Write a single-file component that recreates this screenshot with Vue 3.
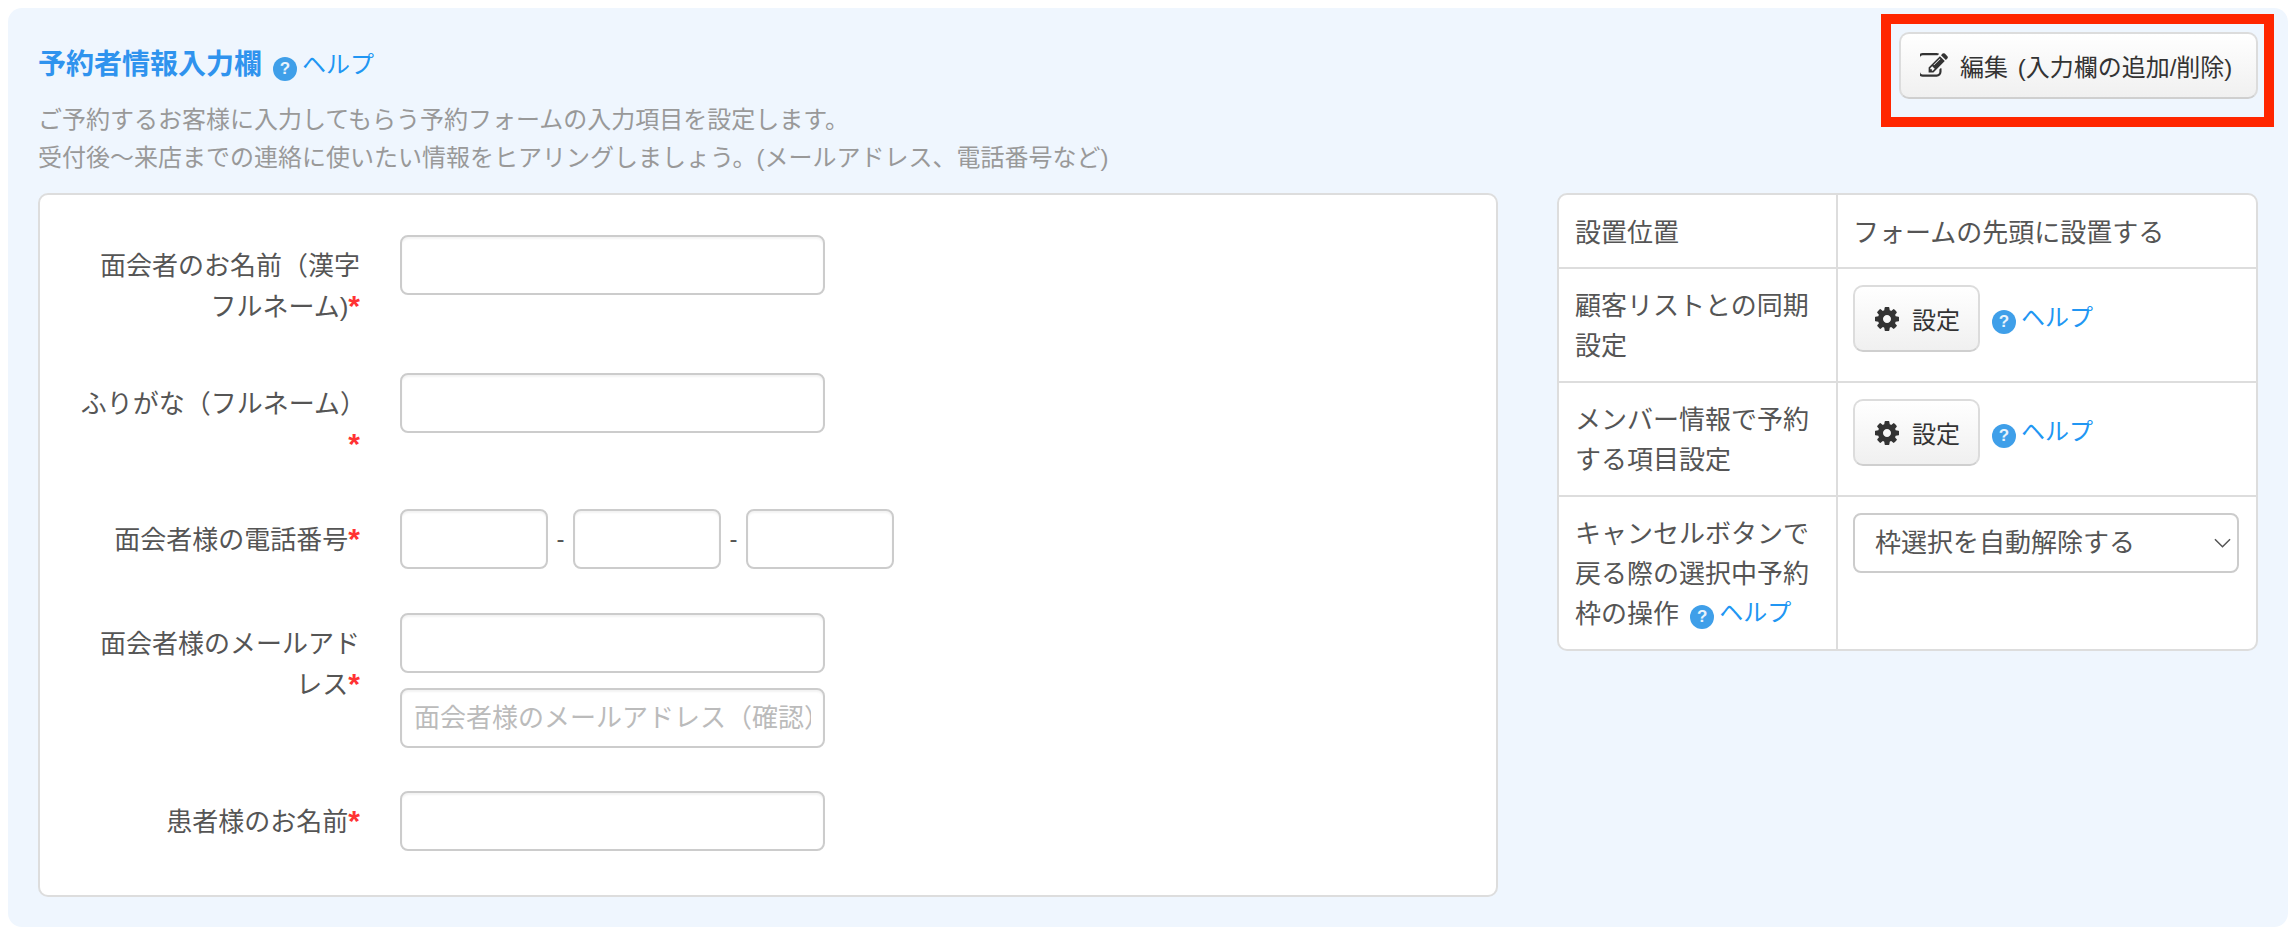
<script setup>
const gear = 'M1152 896q0-106-75-181t-181-75-181 75-75 181 75 181 181 75 181-75 75-181zm512-109v222q0 12-8 23t-20 13l-185 28q-19 54-39 91 35 50 107 138 10 12 10 25t-9 23q-27 37-99 108t-94 71q-12 0-26-9l-138-108q-44 23-91 38-16 136-29 186-7 28-36 28h-222q-14 0-24.5-8.5t-11.5-21.5l-28-184q-49-16-90-37l-141 107q-10 9-25 9-14 0-25-11-126-114-165-168-7-10-7-23 0-12 8-23 15-21 51-66.5t54-70.5q-27-50-41-99l-183-27q-13-2-21-12.5t-8-23.5v-222q0-12 8-23t19-13l186-28q14-46 39-92-40-57-107-138-10-12-10-24 0-10 9-23 26-36 98.5-107.5t94.5-71.5q13 0 26 10l138 107q44-23 91-38 16-136 29-186 7-28 36-28h222q14 0 24.5 8.5t11.5 21.5l28 184q49 16 90 37l142-107q9-9 24-9 13 0 25 10 129 119 165 170 7 8 7 22 0 12-8 23-15 21-51 66.5t-54 70.5q26 50 41 98l183 28q13 2 21 12.5t8 23.5z'
const pencil = 'M888 1184l116-116-152-152-116 116v56h96v96h56zm440-720q-16-16-33 1l-350 350q-17 17-1 33t33-1l350-350q17-17 1-33zm80 594v190q0 119-84.5 203.5t-203.5 84.5h-832q-119 0-203.5-84.5t-84.5-203.5v-832q0-119 84.5-203.5t203.5-84.5h832q63 0 117 25 15 7 18 23 3 17-9 29l-49 49q-14 14-32 8-23-6-45-6h-832q-66 0-113 47t-47 113v832q0 66 47 113t113 47h832q66 0 113-47t47-113v-126q0-13 9-22l64-64q15-15 35-7t20 29zm-96-738l288 288-672 672h-288v-288zm444 132l-92 92-288-288 92-92q28-28 68-28t68 28l152 152q28 28 28 68t-28 68z'
</script>

<template>
  <div class="page">
    <section class="panel">
      <header class="head">
        <div class="intro">
          <div class="title-line">
            <h2 class="title">予約者情報入力欄</h2>
            <span class="help"><i class="q">?</i><a class="help-text">ヘルプ</a></span>
          </div>
          <p class="sub">ご予約するお客様に入力してもらう予約フォームの入力項目を設定します。</p>
          <p class="sub">受付後〜来店までの連絡に使いたい情報をヒアリングしましょう。(メールアドレス、電話番号など)</p>
        </div>
        <div class="edit-wrap">
          <button class="btn edit-btn" type="button">
            <svg class="pencil" viewBox="128 128 1664 1664"><path :d="pencil" fill="#333" /></svg>
            <span>編集 (入力欄の追加/削除)</span>
          </button>
          <div class="frame"></div>
        </div>
      </header>

      <div class="body">
        <div class="card">
          <div class="row row-a">
            <label class="lab">面会者のお名前（漢字<br />フルネーム)<b>*</b></label>
            <div class="fields"><input class="inp" type="text" /></div>
          </div>
          <div class="row row-b">
            <label class="lab"><span class="over">ふりがな（フルネーム）</span><br /><b>*</b></label>
            <div class="fields"><input class="inp" type="text" /></div>
          </div>
          <div class="row row-c">
            <label class="lab">面会者様の電話番号<b>*</b></label>
            <div class="fields tel">
              <input class="inp short" type="text" /><span class="dash">-</span>
              <input class="inp short" type="text" /><span class="dash">-</span>
              <input class="inp short" type="text" />
            </div>
          </div>
          <div class="row row-d">
            <label class="lab">面会者様のメールアド<br />レス<b>*</b></label>
            <div class="fields stack">
              <input class="inp" type="text" />
              <input class="inp" type="text" placeholder="面会者様のメールアドレス（確認）" />
            </div>
          </div>
          <div class="row row-e">
            <label class="lab">患者様のお名前<b>*</b></label>
            <div class="fields"><input class="inp" type="text" /></div>
          </div>
        </div>

        <table class="side">
          <tbody>
            <tr class="tr-1">
              <th>設置位置</th>
              <td>フォームの先頭に設置する</td>
            </tr>
            <tr class="tr-2">
              <th>顧客リストとの同期設定</th>
              <td>
                <div class="act">
                  <button class="btn set-btn" type="button">
                    <svg class="gear" viewBox="128 128 1536 1536"><path :d="gear" fill="#333" /></svg>
                    <span>設定</span>
                  </button>
                  <span class="help small"><i class="q">?</i><a class="help-text">ヘルプ</a></span>
                </div>
              </td>
            </tr>
            <tr class="tr-2">
              <th>メンバー情報で予約する項目設定</th>
              <td>
                <div class="act">
                  <button class="btn set-btn" type="button">
                    <svg class="gear" viewBox="128 128 1536 1536"><path :d="gear" fill="#333" /></svg>
                    <span>設定</span>
                  </button>
                  <span class="help small"><i class="q">?</i><a class="help-text">ヘルプ</a></span>
                </div>
              </td>
            </tr>
            <tr class="tr-3">
              <th>キャンセルボタンで戻る際の選択中予約枠の操作 <span class="help inline"><i class="q">?</i><a class="help-text">ヘルプ</a></span></th>
              <td>
                <div class="sel-wrap">
                  <select class="sel">
                    <option>枠選択を自動解除する</option>
                  </select>
                  <svg class="chev" viewBox="0 0 18 10"><path d="M1 1l8 8 8-8" fill="none" stroke="#555" stroke-width="1.6" /></svg>
                </div>
              </td>
            </tr>
          </tbody>
        </table>
      </div>
    </section>
  </div>
</template>

<style>
html, body { margin: 0; background: #fff; }
</style>

<style scoped>
.page {
  width: 2294px;
  height: 940px;
  padding: 8px 6px 13px 8px;
  box-sizing: border-box;
  font-family: "Liberation Sans", "Noto Sans CJK JP", sans-serif;
  color: #555;
  font-size: 26px;
  overflow: hidden;
}
.panel {
  height: 919px;
  box-sizing: border-box;
  padding: 24px 30px 0 30px;
  background: #eff6fe;
  border-radius: 14px;
}
.head { display: flex; justify-content: space-between; align-items: flex-start; height: 161px; }
.title-line { display: flex; align-items: center; height: 66px; }
.title { margin: 0; font-size: 28px; line-height: 66px; font-weight: 700; color: #2f93ee; }
.help { display: inline-flex; align-items: flex-start; margin-left: 11px; }
.q {
  display: inline-block;
  width: 24px;
  height: 24px;
  margin-top: 8px;
  border-radius: 50%;
  background: #3f9fe9;
  color: #e8f3fc;
  font: normal 700 17px/24px "Liberation Sans", sans-serif;
  text-align: center;
}
.help-text { margin-left: 5px; font-size: 24px; line-height: 32px; color: #2196f3; }
.sub { margin: 0; font-size: 24px; line-height: 38px; color: #999; }
.sub:first-of-type { margin-top: 3px; }
.edit-wrap { position: relative; }
.btn {
  display: inline-flex;
  align-items: center;
  box-sizing: border-box;
  height: 67px;
  border: 2px solid #dcdcdc;
  border-bottom-color: #cfcfcf;
  border-radius: 10px;
  background: linear-gradient(#fff, #f0f0f0);
  font-family: inherit;
  font-size: 24px;
  color: #333;
}
.edit-btn { width: 359px; padding: 0 0 0 19px; gap: 12px; word-spacing: 3px; }
.pencil { width: 28px; height: 28px; flex: none; margin-top: 2px; }
.frame {
  position: absolute;
  left: -18px;
  top: -18px;
  width: 393px;
  height: 113px;
  box-sizing: border-box;
  border: 10px solid #ff2600;
}
.body { display: flex; justify-content: space-between; align-items: flex-start; }
.card {
  box-sizing: border-box;
  width: 1460px;
  height: 704px;
  padding-top: 40px;
  background: #fff;
  border: 2px solid #ddd;
  border-radius: 10px;
}
.row { display: flex; align-items: flex-start; gap: 40px; padding-left: 40px; }
.row-a { height: 138px; }
.row-b { height: 136px; }
.row-c { height: 104px; }
.row-d { height: 178px; }
.lab {
  flex: none;
  box-sizing: border-box;
  width: 280px;
  padding-top: 11px;
  text-align: right;
  font-size: 26px;
  line-height: 41px;
  color: #555;
  white-space: nowrap;
}
.lab b { color: #f33; font-weight: 700; font-size: 30px; line-height: 0; }
.over { display: inline-block; margin-right: -6px; text-spacing-trim: space-all; }
.fields { display: flex; }
.stack { flex-direction: column; gap: 15px; }
.tel { align-items: center; }
.inp {
  box-sizing: border-box;
  display: block;
  width: 425px;
  height: 60px;
  padding: 0 12px;
  border: 2px solid #ccc;
  border-radius: 8px;
  background: #fff;
  box-shadow: inset 0 2px 2px rgba(0,0,0,.05);
  font-family: inherit;
  font-size: 26px;
  outline: none;
}
.inp::placeholder { color: #bbb; opacity: 1; }
.short { width: 148px; }
.dash { width: 25px; text-align: center; font-size: 24px; color: #555; }
.side {
  box-sizing: border-box;
  width: 701px;
  border-collapse: separate;
  border-spacing: 0;
  background: #fff;
  border: 2px solid #ddd;
  border-radius: 10px;
  font-size: 26px;
  line-height: 40px;
  table-layout: fixed;
}
.side th, .side td {
  box-sizing: border-box;
  padding: 17px 16px 13px;
  vertical-align: top;
  text-align: left;
  font-weight: 400;
  color: #555;
  border-bottom: 2px solid #ddd;
}
.side td { padding: 16px 16px 13px 15px; }
.side th { width: 279px; border-right: 2px solid #ddd; padding-left: 16px; }
.side tr:last-child th, .side tr:last-child td { border-bottom: 0; }
.tr-1 th, .tr-1 td { height: 74px; padding-top: 18px; }
.side .tr-1 td { padding-top: 18px; }
.tr-2 th, .tr-2 td { height: 114px; }
.tr-3 th, .tr-3 td { height: 152px; }
.act { display: flex; align-items: flex-start; }
.set-btn { width: 127px; padding: 0 0 0 20px; gap: 13px; }
.gear { width: 24px; height: 24px; flex: none; }
.help.small { margin-left: 12px; margin-top: 17px; }
.help.inline { margin-left: 4px; vertical-align: top; margin-top: 3px; }
.sel-wrap { position: relative; width: 386px; }
.sel {
  appearance: none;
  box-sizing: border-box;
  width: 100%;
  height: 60px;
  padding: 0 20px;
  border: 2px solid #ccc;
  border-radius: 8px;
  background: #fff;
  font-family: inherit;
  font-size: 26px;
  color: #555;
}
.chev { position: absolute; right: 8px; top: 25px; width: 17px; height: 10px; }
</style>
